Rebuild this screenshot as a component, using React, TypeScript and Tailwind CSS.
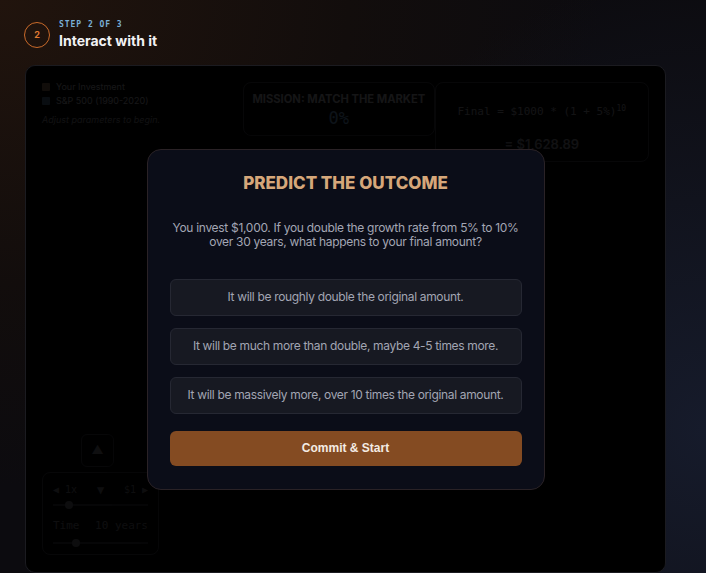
import { useState } from 'react';

const OPTIONS = [
  'It will be roughly double the original amount.',
  'It will be much more than double, maybe 4-5 times more.',
  'It will be massively more, over 10 times the original amount.',
];

// ─── Playground (sits under the modal's dark backdrop) ────────────────────────
function Playground() {
  return (
    <div className="flex h-full flex-col">
      <div className="flex">
        <div className="w-[201px] shrink-0 -mt-[2px] text-[9px] text-[#b4b4be]">
          <div className="flex h-[14px] items-center gap-[6px]">
            <span className="h-[8px] w-[8px] rounded-[1px] bg-[#8a6e52]" />
            <span>Your Investment</span>
          </div>
          <div className="flex h-[14px] items-center gap-[6px]">
            <span className="h-[8px] w-[8px] rounded-[1px] bg-[#4c6a8c]" />
            <span>S&amp;P 500 (1990-2020)</span>
          </div>
          <div className="mt-[5px] italic text-[#8c8c96]">Adjust parameters to begin.</div>
        </div>

        <div className="flex h-[54px] w-[192px] flex-col items-center rounded-lg border border-[#3c3c44] pt-[9px]">
          <div className="text-[11.2px] font-bold leading-[14px] text-[#a8a8b0]">MISSION: MATCH THE MARKET</div>
          <div className="mt-[2px] font-['DejaVu_Sans_Mono',monospace] text-[17px] leading-[20px] text-[#6c9cc8]">0%</div>
        </div>

        <div className="flex h-[80px] w-[215px] flex-col items-center rounded-lg border border-[#3c3c44] pt-[22px] font-['DejaVu_Sans_Mono',monospace] text-[#9c9ca6]">
          <div className="text-[11px] leading-[14px]">
            Final = $1000 * (1 + 5%)<sup className="text-[8px]">10</sup>
          </div>
          <div className="mt-[17px] font-['Inter',sans-serif] text-[13px] font-semibold leading-[16px] text-[#8e8e98]">= $1,628.89</div>
        </div>
      </div>

      <div className="flex-1" />

      <div className="ml-[39px] flex h-[33px] w-[33px] items-center justify-center rounded-md border border-[#3a3a42] text-[12px] text-[#7a7a84]">▲</div>
      <div className="mt-[5px] mb-[1px] w-[117px] rounded-lg border border-[#3a3a42] px-[10px] pt-[8px] pb-[10px] font-['DejaVu_Sans_Mono',monospace] text-[10px] text-[#74747e]">
        <div className="flex items-center justify-between">
          <span>◀ 1x</span>
          <span className="text-[12px]">▼</span>
          <span>$1 ▶</span>
        </div>
        <div className="relative mt-[5px] h-[2px] bg-[#34343c]">
          <span className="absolute left-[12px] top-[-3px] h-[8px] w-[8px] rounded-full bg-[#6a6a74]" />
        </div>
        <div className="mt-[12px] flex justify-between text-[11px]">
          <span>Time</span>
          <span>10 years</span>
        </div>
        <div className="relative mt-[8px] h-[2px] bg-[#34343c]">
          <span className="absolute left-[19px] top-[-3px] h-[8px] w-[8px] rounded-full bg-[#6a6a74]" />
        </div>
      </div>
    </div>
  );
}

// ─── Prediction modal ─────────────────────────────────────────────────────────
function PredictModal() {
  const [choice, setChoice] = useState<number | null>(null);
  return (
    <div className="w-[398px] rounded-[14px] border border-[#2a2226] bg-[#0b0d18] px-[22px] pt-[22px] pb-[23px] shadow-2xl">
      <h2 className="text-center text-[17px] font-extrabold leading-[22px] text-[#d6a77a]">
        PREDICT THE OUTCOME
      </h2>
      <p className="mt-[27px] whitespace-nowrap text-center text-[12px] leading-[14px] tracking-[-0.025em] text-[#a3a6b4]">
        You invest $1,000. If you double the growth rate from 5% to 10%
        <br />
        over 30 years, what happens to your final amount?
      </p>
      <div className="mt-[30px] flex flex-col gap-[12px]">
        {OPTIONS.map((o, i) => (
          <button
            key={o}
            onClick={() => setChoice(i)}
            className={`h-[37px] w-full rounded-md border text-[12px] tracking-[-0.028em] text-[#a2a5b3] ${
              choice === i ? 'border-[#854b22] bg-[#1c1a1c]' : 'border-[#262833] bg-[#171922]'
            }`}
          >
            {o}
          </button>
        ))}
      </div>
      <button className="mt-[17px] h-[35px] w-full rounded-md bg-[#844b22] font-['Liberation_Sans',Arial,sans-serif] text-[12px] font-bold text-[#f4ece4]">
        Commit &amp; Start
      </button>
    </div>
  );
}

// ─── Page ─────────────────────────────────────────────────────────────────────
export default function App() {
  return (
    <div className="h-[573px] w-[706px] overflow-hidden bg-[#0e0d12] bg-[radial-gradient(ellipse_at_0%_0%,#21140d_0%,#120d0c_35%,#0c0b0f_60%)] font-['Inter',sans-serif]">
      <div className="h-full bg-[radial-gradient(ellipse_60%_80%_at_100%_75%,#161b2b_0%,transparent_100%)] px-[24px] pt-[20px]">
        <header className="flex items-center gap-[9px]">
          <div className="flex h-[26px] w-[26px] items-center justify-center rounded-full border-[1.5px] border-[#c96a2a] text-[9px] font-bold text-[#e07a32]">
            2
          </div>
          <div>
            <div className="font-['DejaVu_Sans_Mono',monospace] text-[8px] font-bold leading-[10px] tracking-[0.12em] text-[#79afd6]">
              STEP 2 OF 3
            </div>
            <div className="mt-[3px] text-[14px] font-bold leading-[16px] text-[#f2f2f4]">Interact with it</div>
          </div>
        </header>

        <div className="relative mt-[16px] ml-[1px] h-[508px] w-[641px] rounded-[10px] border border-[#1b1b20] bg-[#040406] px-[16px] pt-[16px] pb-[16px]">
          <Playground />
          <div className="absolute inset-0 flex items-center justify-center rounded-[10px] bg-black/[0.88]">
            <PredictModal />
          </div>
        </div>
      </div>
    </div>
  );
}
